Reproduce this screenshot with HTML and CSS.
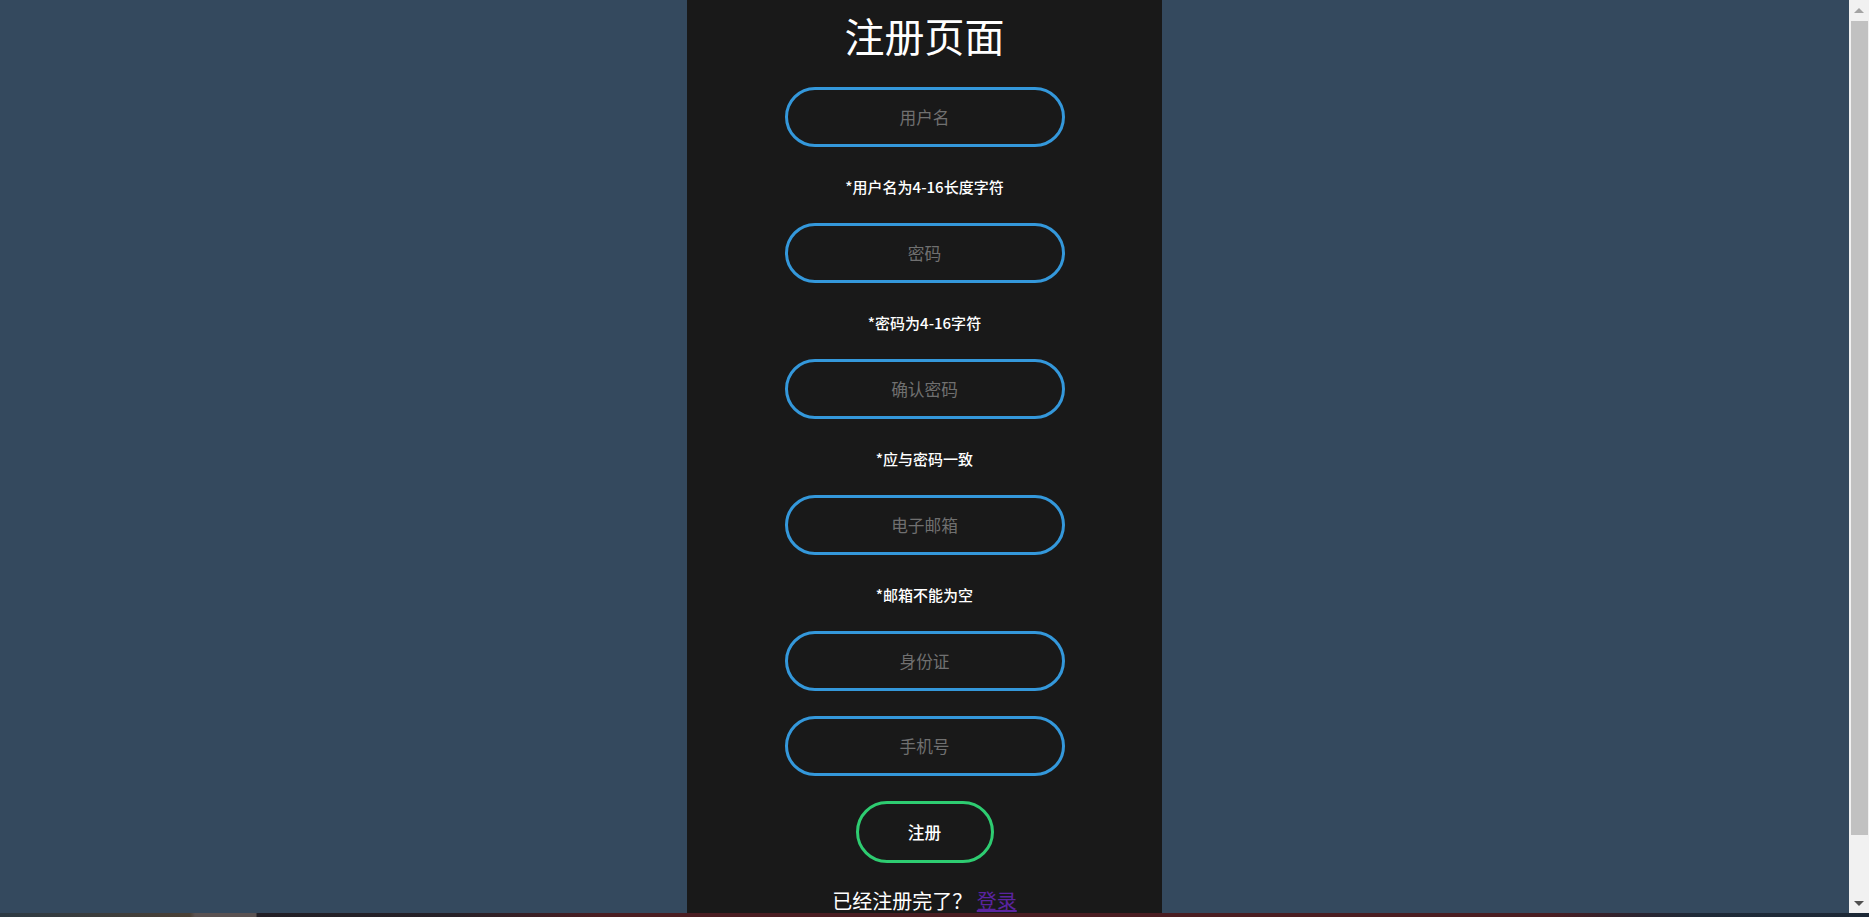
FILE: index.html
```html
<!DOCTYPE html>
<html lang="zh-CN">
<head>
<meta charset="utf-8">
<title>注册页面</title>
<link rel="stylesheet" href="styles.css">
</head>
<body>
<div class="window">
  <main class="page">
    <form class="box">
      <h1 class="title">注册页面</h1>
      <input class="field" type="text" placeholder="用户名">
      <p class="hint">*用户名为4-16长度字符</p>
      <input class="field" type="password" placeholder="密码">
      <p class="hint">*密码为4-16字符</p>
      <input class="field" type="password" placeholder="确认密码">
      <p class="hint">*应与密码一致</p>
      <input class="field" type="text" placeholder="电子邮箱">
      <p class="hint">*邮箱不能为空</p>
      <input class="field" type="text" placeholder="身份证">
      <input class="field" type="text" placeholder="手机号">
      <input class="submit" type="submit" value="注册">
      <p class="footer">已经注册完了？ <a class="link" href="#">登录</a></p>
    </form>
  </main>
  <div class="scrollbar" aria-hidden="true">
    <div class="sb-btn"><span class="arrow-up"></span></div>
    <div class="sb-track"><div class="sb-thumb"></div></div>
    <div class="sb-btn"><span class="arrow-down"></span></div>
  </div>
</div>
<div class="strip"></div>
</body>
</html>
```
FILE: styles.css
```css
html, body {
  margin: 0;
  height: 100%;
}

body {
  display: flex;
  flex-direction: column;
  font-family: "Noto Sans CJK SC", "Noto Sans", sans-serif;
  background: #34495e;
}

.window {
  flex: 1;
  min-height: 0;
  display: flex;
}

.page {
  flex: 1;
  min-width: 0;
  overflow: hidden;
  background: #34495e;
  display: flex;
  justify-content: center;
  align-items: flex-start;
}

.box {
  width: 475px;
  box-sizing: border-box;
  padding: 10px 50px 50px;
  background: #191919;
  text-align: center;
  display: flow-root;
}

.title {
  margin: 0 0 27px;
  font-size: 40px;
  line-height: 50px;
  font-weight: 400;
  color: #ffffff;
}

.field {
  display: block;
  box-sizing: border-box;
  width: 280px;
  height: 60px;
  margin: 25px auto;
  padding: 0 12px;
  border: 3px solid #3498db;
  border-radius: 30px;
  background: none;
  outline: none;
  color: #ffffff;
  font-family: inherit;
  font-size: 16.7px;
  text-align: center;
}

.field::placeholder {
  color: #707070;
}

.hint {
  margin: 25px 0;
  height: 22px;
  padding-top: 4px;
  font-size: 15px;
  line-height: 22px;
  font-weight: 500;
  color: #ffffff;
}

.submit {
  display: block;
  box-sizing: border-box;
  width: 138px;
  height: 62px;
  margin: 25px auto;
  border: 3px solid #2ecc71;
  border-radius: 31px;
  background: none;
  color: #ffffff;
  font-family: inherit;
  font-size: 16.7px;
  font-weight: 500;
  cursor: pointer;
}

.footer {
  margin: 25px 0 0;
  font-size: 20px;
  line-height: 25px;
  color: #ffffff;
}

.link {
  color: #5a24a0;
  text-decoration: underline;
}

.scrollbar {
  width: 20px;
  flex: none;
  display: flex;
  flex-direction: column;
  background: #f1f1f1;
}

.sb-btn {
  height: 20px;
  flex: none;
  display: flex;
  align-items: center;
  justify-content: center;
}

.arrow-up {
  width: 0;
  height: 0;
  border-left: 5px solid transparent;
  border-right: 5px solid transparent;
  border-bottom: 5px solid #a3a3a3;
}

.arrow-down {
  width: 0;
  height: 0;
  border-left: 5px solid transparent;
  border-right: 5px solid transparent;
  border-top: 5px solid #505050;
}

.sb-track {
  flex: 1;
  padding: 1px 1px 0 2px;
}

.sb-thumb {
  height: 814px;
  background: #c1c1c1;
}

.strip {
  height: 4px;
  flex: none;
  background: linear-gradient(90deg,
    #2c3a44 0px, #4a4036 190px,
    #5a5252 195px, #5a5252 256px,
    #221f26 257px, #262128 450px,
    #4a1d22 600px, #4a1d22 1550px,
    #2a2430 1640px, #1e2a38 1700px, #1c2836 1869px);
}
```
